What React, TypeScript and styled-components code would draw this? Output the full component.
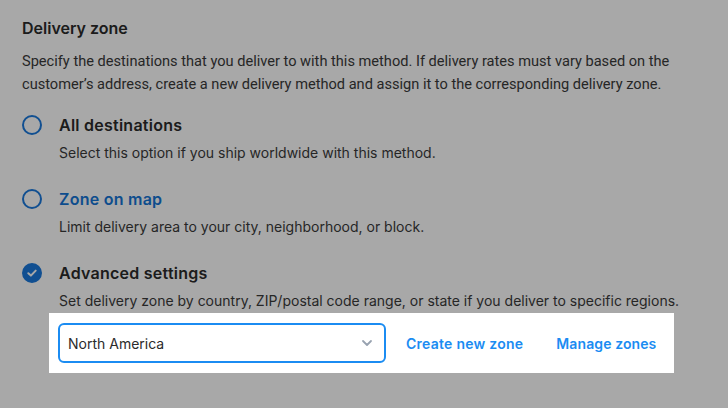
import React from "react";
import styled, { createGlobalStyle } from "styled-components";

const Global = createGlobalStyle`
  html, body { margin: 0; padding: 0; background: #ffffff; }
  body { font-family: Inter, "Noto Sans", sans-serif; -webkit-font-smoothing: antialiased; }
  #root { width: 728px; height: 408px; overflow: hidden; position: relative; }
`;

const Page = styled.div`
  width: 728px;
  height: 408px;
  box-sizing: border-box;
  padding: 17px 22px 0 22px;
  background: #ffffff;
  color: #333333;
  overflow: hidden;
`;

const Title = styled.h2`
  margin: 0;
  font-size: 16px;
  line-height: 22px;
  font-weight: 600;
  color: #2b2b2b;
`;

const Intro = styled.p`
  margin: 11px 0 0 0;
  font-family: Roboto, Inter, sans-serif;
  font-size: 14.6px;
  line-height: 23px;
  color: #3a3a3a;
  width: 690px;
`;

const Options = styled.div`
  display: flex;
  flex-direction: column;
  margin-top: 18px;
`;

const Option = styled.div`
  display: grid;
  grid-template-columns: 20px 1fr;
  column-gap: 17px;
  align-items: center;
  padding-bottom: 25px;
  &:last-child { padding-bottom: 0; }
`;

const Radio = styled.span<{ $checked?: boolean }>`
  width: 20px;
  height: 20px;
  box-sizing: border-box;
  border-radius: 50%;
  border: 2px solid #1a79dc;
  background: ${(p) => (p.$checked ? "#1a79dc" : "transparent")};
  display: flex;
  align-items: center;
  justify-content: center;
`;

const Label = styled.span<{ $link?: boolean }>`
  font-size: 16px;
  line-height: 22px;
  font-weight: 600;
  color: ${(p) => (p.$link ? "#1575d6" : "#2b2b2b")};
  letter-spacing: 0.25px;
`;

const Desc = styled.span`
  grid-column: 2;
  margin-top: 7px;
  font-size: 14px;
  line-height: 20px;
  color: #3a3a3a;
`;

const Spotlight = styled.div`
  grid-column: 1 / span 2;
  position: relative;
  z-index: 1;
  margin: 2px 0 0 27px;
  width: fit-content;
  display: flex;
  align-items: center;
  padding: 10px 18px 10px 9px;
  background: #ffffff;
  box-shadow: 0 0 0 2000px rgba(0, 0, 0, 0.34);
`;

const Select = styled.div`
  width: 328px;
  height: 40px;
  box-sizing: border-box;
  border: 2px solid #1b8cf2;
  border-radius: 6px;
  display: flex;
  align-items: center;
  justify-content: space-between;
  padding: 0 11px 0 8px;
  font-size: 14px;
  color: #2b2b2b;
`;

const LinkButton = styled.span<{ $gap: number; $spacing: number }>`
  margin-left: ${(p) => p.$gap}px;
  font-size: 14px;
  font-weight: 600;
  letter-spacing: ${(p) => p.$spacing}px;
  color: #1b8cf2;
  white-space: nowrap;
`;

const Check = () => (
  <svg width="12" height="12" viewBox="0 0 12 12">
    <path d="M2.3 6.2 L4.9 8.6 L9.7 3.6" fill="none" stroke="#fff" strokeWidth="2" strokeLinecap="round" strokeLinejoin="round" />
  </svg>
);

const Chevron = () => (
  <svg width="12" height="8" viewBox="0 0 12 8">
    <path d="M2 2 L6 6 L10 2" fill="none" stroke="#98a2b0" strokeWidth="1.8" strokeLinecap="round" strokeLinejoin="round" />
  </svg>
);

export default function App() {
  return (
    <>
      <Global />
      <Page>
        <Title>Delivery zone</Title>
        <Intro>
          Specify the destinations that you deliver to with this method. If delivery rates must vary based on the
          customer’s address, create a new delivery method and assign it to the corresponding delivery zone.
        </Intro>
        <Options>
          <Option>
            <Radio />
            <Label>All destinations</Label>
            <Desc>Select this option if you ship worldwide with this method.</Desc>
          </Option>
          <Option>
            <Radio />
            <Label $link>Zone on map</Label>
            <Desc>Limit delivery area to your city, neighborhood, or block.</Desc>
          </Option>
          <Option>
            <Radio $checked>
              <Check />
            </Radio>
            <Label>Advanced settings</Label>
            <Desc>Set delivery zone by country, ZIP/postal code range, or state if you deliver to specific regions.</Desc>
            <Spotlight>
              <Select>
                <span>North America</span>
                <Chevron />
              </Select>
              <LinkButton $gap={20} $spacing={0.25}>Create new zone</LinkButton>
              <LinkButton $gap={33} $spacing={0.1}>Manage zones</LinkButton>
            </Spotlight>
          </Option>
        </Options>
      </Page>
    </>
  );
}
